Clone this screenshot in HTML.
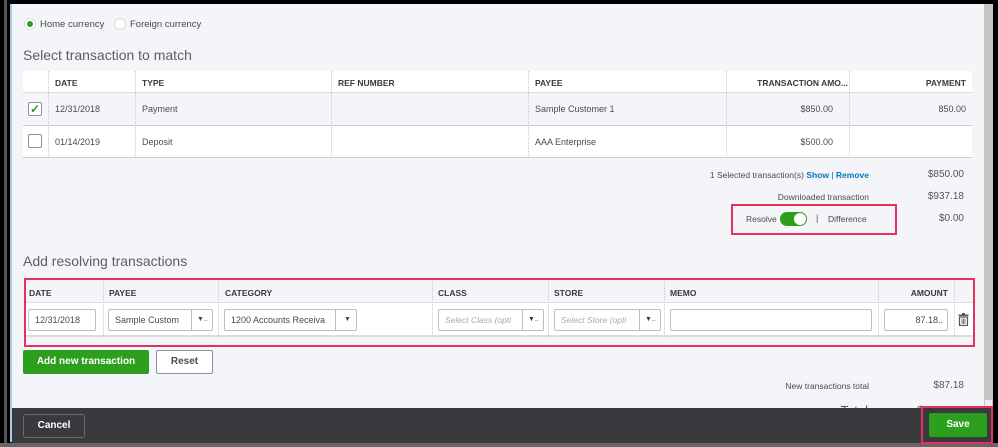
<!DOCTYPE html>
<html><head><meta charset="utf-8"><style>
*{box-sizing:border-box;margin:0;padding:0}
body{width:998px;height:447px;overflow:hidden;background:#000;font-family:"Liberation Sans",sans-serif;color:#4a4b4f;position:relative}
.a{position:absolute}
.main{left:12px;top:4px;width:972px;height:404px;background:#f4f5f8}
.t{font-size:9px;position:absolute;white-space:nowrap}
.h{font-weight:bold;font-size:8.5px;color:#393a3d}
.in{position:absolute;background:#fff;border:1px solid #babec5;border-radius:2px;font-size:9px;padding-left:6px;line-height:20px;white-space:nowrap;overflow:hidden}
.vd{position:absolute;border-left:1px dotted #c8c8c8}
</style></head><body>
<div class="a" style="left:4px;top:0;width:3px;height:447px;background:#555"></div>
<div class="a" style="left:10px;top:4px;width:2px;height:438px;background:#a9cbe8"></div>
<div class="a main"></div>
<div class="a" style="left:984px;top:4px;width:9px;height:404px;background:#c4c4c4"></div>
<div class="a" style="left:985px;top:400px;width:7px;height:8px;background:#eee"></div>
<div class="a" style="left:0;top:443px;width:998px;height:4px;background:#666"></div>

<div class="a" style="left:24px;top:18px;width:12px;height:12px;border-radius:50%;background:#fff;border:1px solid #ddd"></div>
<div class="a" style="left:27px;top:21px;width:6px;height:6px;border-radius:50%;background:#2ca01c"></div>
<div class="t" style="left:40px;top:19px;font-size:9.5px">Home currency</div>
<div class="a" style="left:114px;top:18px;width:12px;height:12px;border-radius:50%;background:#fff;border:1px solid #ddd"></div>
<div class="t" style="left:130px;top:19px;font-size:9.5px">Foreign currency</div>
<div class="t" style="left:23px;top:47px;font-size:14px;color:#5d5e63">Select transaction to match</div>

<div class="a" style="left:23px;top:71px;width:949px;height:22px;background:#fff;border-bottom:1px solid #ddd"></div>
<div class="a" style="left:23px;top:93px;width:949px;height:33px;background:#f4f5f8;border-bottom:1px solid #ccc"></div>
<div class="a" style="left:23px;top:126px;width:949px;height:32px;background:#fff;border-bottom:1px solid #ccc"></div>
<div class="vd" style="left:48px;top:71px;height:87px"></div>
<div class="vd" style="left:135px;top:71px;height:87px"></div>
<div class="vd" style="left:331px;top:71px;height:87px"></div>
<div class="vd" style="left:528px;top:71px;height:87px"></div>
<div class="vd" style="left:726px;top:71px;height:87px"></div>
<div class="vd" style="left:849px;top:71px;height:87px"></div>
<div class="t h" style="left:55px;top:78px">DATE</div>
<div class="t h" style="left:142px;top:78px">TYPE</div>
<div class="t h" style="left:338px;top:78px">REF NUMBER</div>
<div class="t h" style="left:535px;top:78px">PAYEE</div>
<div class="t h" style="right:150px;top:78px">TRANSACTION AMO...</div>
<div class="t h" style="right:32px;top:78px">PAYMENT</div>
<div class="a" style="left:28px;top:102px;width:14px;height:14px;background:#fff;border:1px solid #8d9096;border-radius:2px;color:#2ca01c;font-size:12px;line-height:12px;text-align:center;font-weight:bold">✓</div>
<div class="a" style="left:28px;top:134px;width:14px;height:14px;background:#fff;border:1px solid #8d9096;border-radius:2px"></div>
<div class="t" style="left:55px;top:104px">12/31/2018</div>
<div class="t" style="left:142px;top:104px">Payment</div>
<div class="t" style="left:535px;top:104px">Sample Customer 1</div>
<div class="t" style="right:165px;top:104px">$850.00</div>
<div class="t" style="right:32px;top:104px">850.00</div>
<div class="t" style="left:55px;top:137px">01/14/2019</div>
<div class="t" style="left:142px;top:137px">Deposit</div>
<div class="t" style="left:535px;top:137px">AAA Enterprise</div>
<div class="t" style="right:165px;top:137px">$500.00</div>

<div class="t" style="right:129px;top:170px;font-size:8.5px">1 Selected transaction(s) <span style="color:#0077c5;font-weight:bold">Show</span> | <span style="color:#0077c5;font-weight:bold">Remove</span></div>
<div class="t" style="right:34px;top:169px;font-size:10px;color:#555">$850.00</div>
<div class="t" style="right:129px;top:192px;font-size:8.5px">Downloaded transaction</div>
<div class="t" style="right:34px;top:191px;font-size:10px;color:#555">$937.18</div>
<div class="a" style="left:731px;top:204px;width:166px;height:31px;border:2px solid #e8305e"></div>
<div class="t" style="left:746px;top:214px;font-size:8.5px">Resolve</div>
<div class="a" style="left:780px;top:212px;width:27px;height:14px;border-radius:7px;background:#2ca01c"></div>
<div class="a" style="left:794px;top:213px;width:12px;height:12px;border-radius:50%;background:#fff"></div>
<div class="t" style="left:816px;top:213px;font-size:9px">|</div>
<div class="t" style="left:828px;top:214px;font-size:8.5px">Difference</div>
<div class="t" style="right:34px;top:213px;font-size:10px;color:#555">$0.00</div>

<div class="t" style="left:23px;top:253px;font-size:14px;color:#5d5e63">Add resolving transactions</div>

<div class="a" style="left:24px;top:278px;width:951px;height:69px;border:2px solid #e8305e"></div>
<div class="a" style="left:26px;top:302px;width:947px;height:35px;background:#fff;border-top:1px solid #ddd;border-bottom:2px solid #ddd"></div>
<div class="vd" style="left:103px;top:280px;height:57px"></div>
<div class="vd" style="left:218px;top:280px;height:57px"></div>
<div class="vd" style="left:432px;top:280px;height:57px"></div>
<div class="vd" style="left:548px;top:280px;height:57px"></div>
<div class="vd" style="left:664px;top:280px;height:57px"></div>
<div class="vd" style="left:878px;top:280px;height:57px"></div>
<div class="vd" style="left:954px;top:280px;height:57px"></div>
<div class="t h" style="left:29px;top:288px">DATE</div>
<div class="t h" style="left:109px;top:288px">PAYEE</div>
<div class="t h" style="left:225px;top:288px">CATEGORY</div>
<div class="t h" style="left:438px;top:288px">CLASS</div>
<div class="t h" style="left:554px;top:288px">STORE</div>
<div class="t h" style="left:670px;top:288px">MEMO</div>
<div class="t h" style="right:50px;top:288px">AMOUNT</div>
<div class="in" style="left:28px;top:309px;width:68px;height:22px">12/31/2018</div>
<div class="in" style="left:108px;top:309px;width:105px;height:22px">Sample Custom<span style="position:absolute;left:82px;top:0;width:23px;height:20px;border-left:1px solid #babec5;font-size:7px;padding-left:5px">▼..</span></div>
<div class="in" style="left:224px;top:309px;width:133px;height:22px">1200 Accounts Receiva<span style="position:absolute;left:110px;top:0;width:23px;height:20px;border-left:1px solid #babec5;background:#fff;font-size:7px;padding-left:8px">▼</span></div>
<div class="in" style="left:438px;top:309px;width:106px;height:22px;color:#aaa;font-style:italic;font-size:8.5px">Select Class (opti<span style="position:absolute;left:83px;top:0;width:23px;height:20px;border-left:1px solid #babec5;background:#fff;font-size:7px;padding-left:5px;color:#393a3d;font-style:normal">▼..</span></div>
<div class="in" style="left:554px;top:309px;width:107px;height:22px;color:#aaa;font-style:italic;font-size:8.5px">Select Store (opti<span style="position:absolute;left:84px;top:0;width:23px;height:20px;border-left:1px solid #babec5;background:#fff;font-size:7px;padding-left:5px;color:#393a3d;font-style:normal">▼..</span></div>
<div class="in" style="left:670px;top:309px;width:202px;height:22px"></div>
<div class="in" style="left:884px;top:309px;width:64px;height:22px;text-align:right;padding-right:4px">87.18..</div>
<svg class="a" style="left:958px;top:313px" width="11" height="13" viewBox="0 0 11 13"><rect x="0.5" y="1.5" width="10" height="1.5" fill="#555"/><rect x="4" y="0" width="3" height="2" fill="#555"/><path d="M1.5 4h8v8.5h-8z" fill="none" stroke="#555" stroke-width="1.2"/><path d="M4 5.5v5.5M5.5 5.5v5.5M7 5.5v5.5" stroke="#555" stroke-width="0.8"/></svg>

<div class="a" style="left:23px;top:350px;width:126px;height:24px;background:#2ca01c;border-radius:2px;color:#fff;font-weight:bold;font-size:10px;line-height:24px;text-align:center">Add new transaction</div>
<div class="a" style="left:156px;top:350px;width:57px;height:24px;background:#fff;border:1px solid #8d9096;border-radius:2px;font-weight:bold;font-size:10px;line-height:22px;text-align:center">Reset</div>
<div class="t" style="right:129px;top:381px;font-size:8.5px">New transactions total</div>
<div class="t" style="right:34px;top:380px;font-size:10px;color:#555">$87.18</div>
<div class="t" style="right:130px;top:403px;font-size:13px;color:#555">Total</div>
<div class="t" style="right:34px;top:403px;font-size:13px;color:#555">$937.18</div>

<div class="a" style="left:12px;top:408px;width:981px;height:35px;background:#393a3d"></div>
<div class="a" style="left:23px;top:414px;width:62px;height:24px;border:1px solid #6b6c72;border-radius:3px;color:#fff;font-weight:bold;font-size:10px;line-height:22px;text-align:center">Cancel</div>
<div class="a" style="left:921px;top:406px;width:72px;height:38px;border:2px solid #e8305e"></div>
<div class="a" style="left:929px;top:413px;width:58px;height:24px;background:#2ca01c;border-radius:2px;color:#fff;font-weight:bold;font-size:10px;line-height:24px;text-align:center">Save</div>
</body></html>
